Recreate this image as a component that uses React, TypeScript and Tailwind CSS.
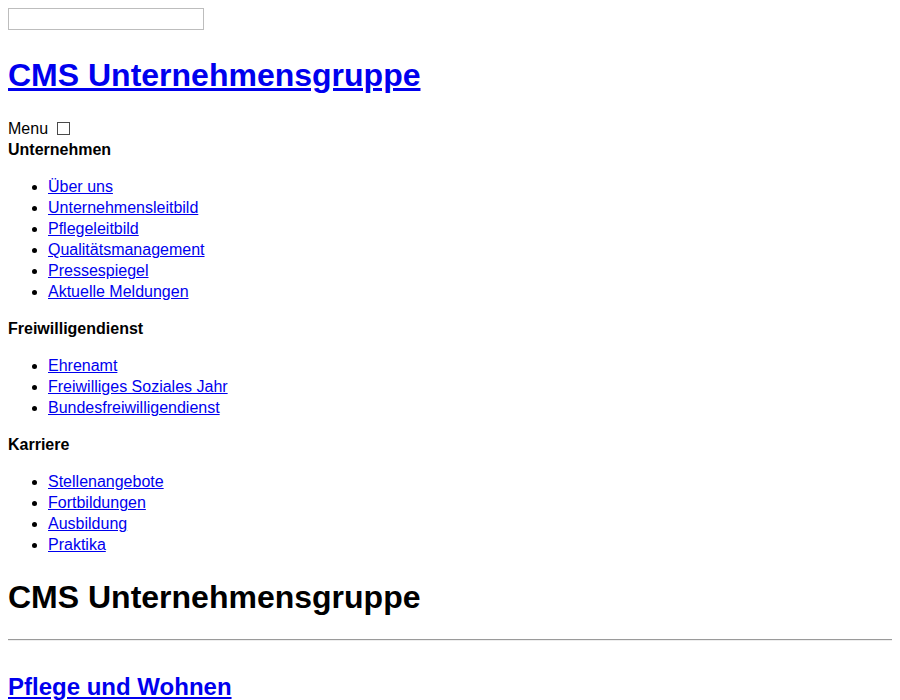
const sections = [
  {
    title: 'Unternehmen',
    links: ['Über uns', 'Unternehmensleitbild', 'Pflegeleitbild', 'Qualitätsmanagement', 'Pressespiegel', 'Aktuelle Meldungen'],
  },
  {
    title: 'Freiwilligendienst',
    links: ['Ehrenamt', 'Freiwilliges Soziales Jahr', 'Bundesfreiwilligendienst'],
  },
  {
    title: 'Karriere',
    links: ['Stellenangebote', 'Fortbildungen', 'Ausbildung', 'Praktika'],
  },
];

export default function App() {
  return (
    <div className="bg-white p-2 text-[16px] leading-[21px] text-black font-['Liberation_Sans',Arial,sans-serif]">
      {/* Search */}
      <div className="h-[25px]">
        <input type="text" className="block w-[196px] h-[22px] border border-[#bdbdbd] bg-white px-[2px] text-[13px]" />
      </div>

      <h1 className="mt-[21.44px] mb-[21.44px] text-[32px] leading-[42px] font-bold">
        <a href="#" className="text-[#0000ee] underline">CMS Unternehmensgruppe</a>
      </h1>

      {/* Navigation */}
      <nav>
        <label className="flex items-center">
          Menu
          <input type="checkbox" className="appearance-none ml-[9px] mt-[1px] w-[13px] h-[13px] border border-[#4a4a4a] bg-white" />
        </label>
        {sections.map((s, i) => (
          <div key={s.title} className={i > 0 ? 'mt-4' : ''}>
            <div className="font-bold">{s.title}</div>
            <ul className="mt-4 pl-10 list-disc">
              {s.links.map((l) => (
                <li key={l}>
                  <a href="#" className="text-[#0000ee] underline">{l}</a>
                </li>
              ))}
            </ul>
          </div>
        ))}
      </nav>

      <h1 className="mt-[21.44px] text-[32px] leading-[42px] font-bold">CMS Unternehmensgruppe</h1>
      <hr className="mt-[20.44px] mb-2 h-[2px] border-t border-b border-t-[#9a9a9a] border-b-[#eeeeee]" />

      <h2 className="mt-[29.92px] text-[24px] leading-[31px] font-bold">
        <a href="#" className="text-[#0000ee] underline">Pflege und Wohnen</a>
      </h2>
    </div>
  );
}
